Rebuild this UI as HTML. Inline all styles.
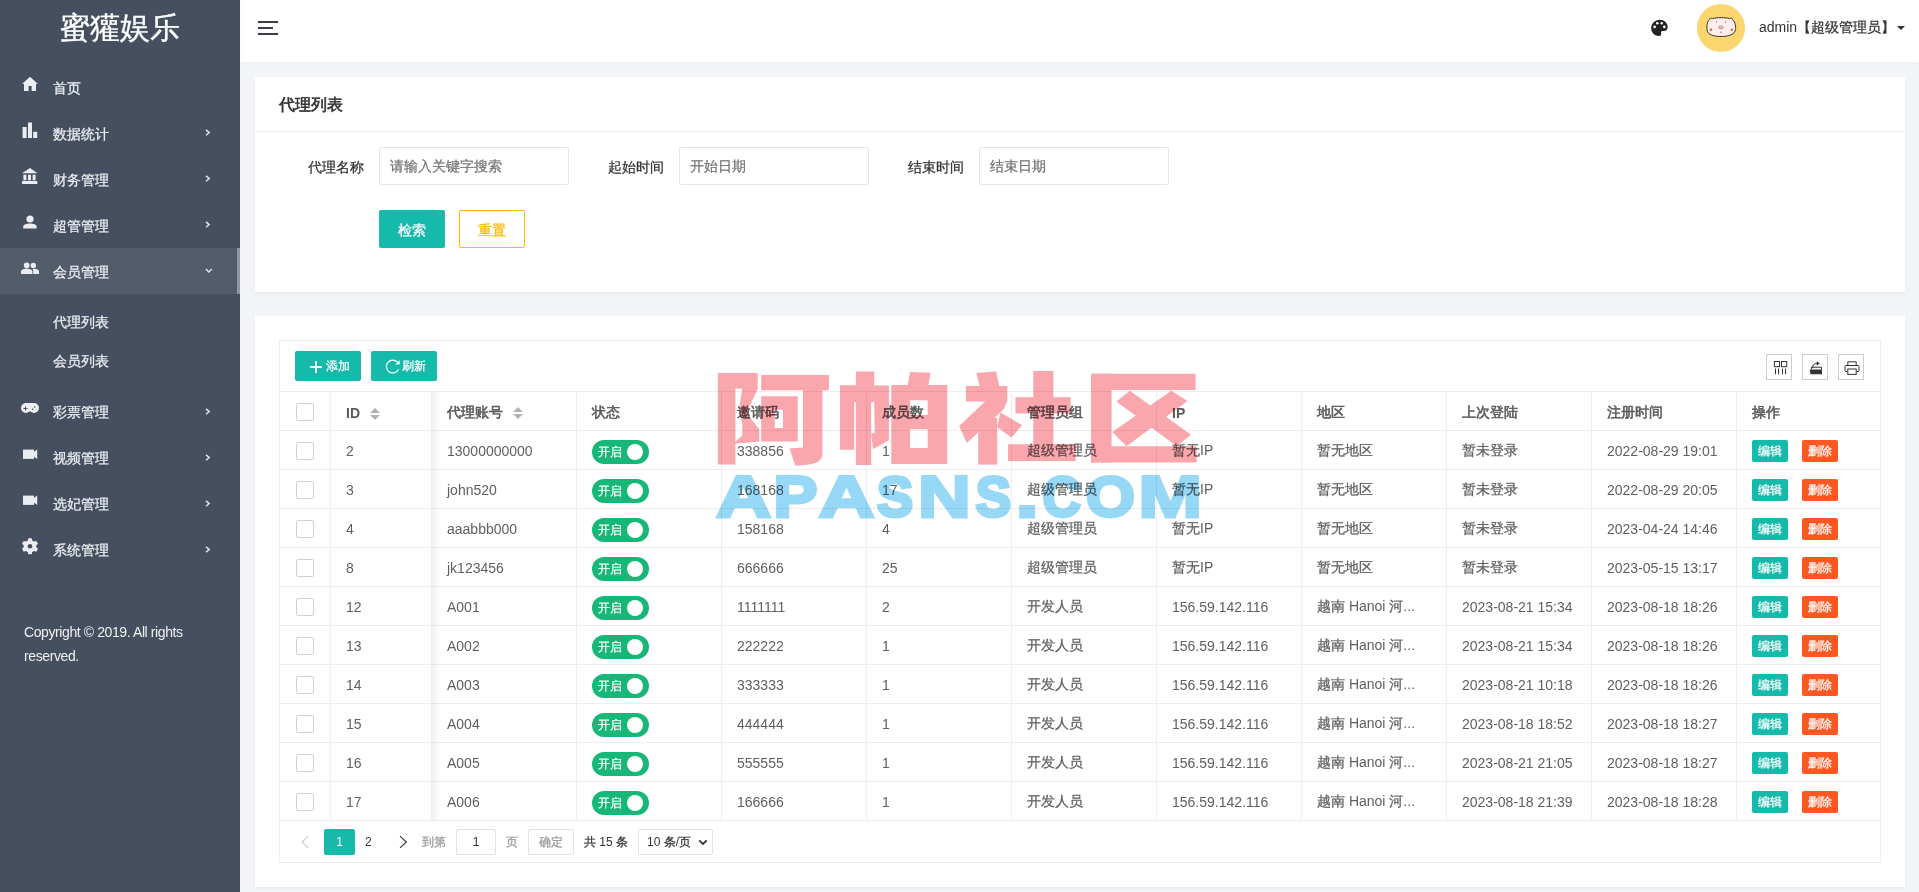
<!DOCTYPE html>
<html><head><meta charset="utf-8">
<style>
*{box-sizing:border-box;margin:0;padding:0}
html,body{width:1919px;height:892px;overflow:hidden;background:#f3f4f8;font-family:"Liberation Sans",sans-serif;font-size:14px;color:#5f5f5f}
#side{position:absolute;left:0;top:0;width:240px;height:892px;background:#454f5f}
#logo{position:absolute;left:0;top:8px;width:240px;text-align:center;color:#fff;font-size:30px;line-height:40px}
.mi{position:absolute;left:0;width:240px;height:46px;color:#eceef1}
.mi .t{position:absolute;left:53px;top:1px;line-height:46px;font-size:14px}
.mi svg{position:absolute;left:22px;top:13px}
.mi .ar{position:absolute;left:205px;top:19px}
.mi.act{background:#535c6b}
.mi.act:after{content:"";position:absolute;right:0;top:0;width:3px;height:46px;background:#8f97a3}
.si{position:absolute;left:53px;color:#eceef1;font-size:14px;line-height:20px}
#copy{position:absolute;left:24px;top:620px;width:210px;color:#f0f0f0;font-size:14px;line-height:24px;letter-spacing:-0.4px}
#hdr{position:absolute;left:240px;top:0;width:1679px;height:62px;background:#fff;box-shadow:0 1px 3px rgba(0,0,0,0.03)}
#hsh{position:absolute;left:0;top:0;width:6px;height:62px;background:linear-gradient(to right,rgba(0,0,0,0.025),rgba(0,0,0,0))}
.panel{position:absolute;left:255px;width:1650px;background:#fff;box-shadow:0 2px 3px rgba(0,0,0,0.04)}
.ham{position:absolute;height:2px;background:#393d49;left:18px}
#uname{position:absolute;left:1519px;top:17px;line-height:20px;color:#333;font-size:14px}
#caret{position:absolute;left:1657px;top:26px;width:0;height:0;border-left:4px solid transparent;border-right:4px solid transparent;border-top:4px solid #333}
#ptitle{position:absolute;left:24px;top:17px;font-size:16px;line-height:22px;color:#333;font-weight:normal}
#ptitle .k{-webkit-text-stroke:0.6px}
#logo .k{-webkit-text-stroke:0.4px}
#psep{position:absolute;left:0;top:54px;width:1650px;height:1px;background:#f0f0f0}
.lbl{position:absolute;top:80px;width:80px;text-align:right;line-height:20px;color:#333;font-size:14px}
.inp{position:absolute;top:70px;width:190px;height:38px;border:1px solid #e6e6e6;border-radius:2px;padding-left:10px;line-height:36px;color:#757575;font-size:14px}
.btn{position:absolute;top:133px;width:66px;height:38px;border-radius:2px;text-align:center;line-height:40px;font-size:14px}
#tbox{position:absolute;left:24px;top:24px;width:1602px;height:523px;border:1px solid #eee}
#tbar{position:absolute;left:0;top:0;width:1600px;height:51px;border-bottom:1px solid #eee}
.tb{position:absolute;top:10px;width:66px;height:30px;background:#16baaa;color:#fff;border-radius:2px;font-size:14px;line-height:30px}
.ti{position:absolute;top:13px;width:26px;height:26px;border:1px solid #ccc}
.ti svg{position:absolute;left:4px;top:4px}
table{position:absolute;left:0;top:51px;border-collapse:separate;border-spacing:0;table-layout:fixed;width:1600px}
td,th{height:39px;border-right:1px solid #eee;border-bottom:1px solid #eee;padding:2px 15px 0 15px;text-align:left;white-space:nowrap;overflow:hidden;font-size:14px;color:#5f5f5f;font-weight:normal;vertical-align:middle}
th{font-weight:bold;color:#5a5a5a;padding-top:3px}
th .k{-webkit-text-stroke:0.55px;font-weight:normal}
td:last-child,th:last-child{border-right:none}
.cb{display:inline-block;position:relative;top:1px;width:18px;height:18px;border:1px solid #d2d2d2;border-radius:2px;vertical-align:middle}
.c0{padding:0 0 0 16px}
.sw{position:relative;top:1px;display:inline-block;width:57px;height:24px;border-radius:12px;background:#16b777;color:#fff;font-size:12px;line-height:24px;padding-left:6px;vertical-align:middle}
.sw b{position:absolute;left:35px;top:4px;width:16px;height:16px;border-radius:50%;background:#fff}
.be,.bd{display:inline-block;width:36px;height:22px;line-height:22px;text-align:center;color:#fff;font-size:12px;border-radius:2px;vertical-align:middle}
.be{background:#16baaa}
.bd{background:#ff5722;margin-left:14px}
.sort{display:inline-block;position:relative;width:10px;height:12px;vertical-align:middle;margin-left:10px}
.sort:before{content:"";position:absolute;left:0;top:0;border-left:5px solid transparent;border-right:5px solid transparent;border-bottom:5px solid #b2b2b2}
.sort:after{content:"";position:absolute;left:0;top:7px;border-left:5px solid transparent;border-right:5px solid transparent;border-top:5px solid #b2b2b2}
#fshadow{position:absolute;left:152px;top:51px;width:9px;height:429px;background:linear-gradient(to right,rgba(0,0,0,0.06),rgba(0,0,0,0))}
#pager{position:absolute;left:0;top:480px;width:1600px;height:41px;font-size:12px;color:#333}
.pg{position:absolute;line-height:20px}
.pbox{position:absolute;top:8px;height:26px;border:1px solid #e2e2e2;border-radius:2px;text-align:center;line-height:24px}
#wm1{position:absolute;left:706px;top:355px;font-size:124px;line-height:124px;font-weight:900;color:#f9a3aa;mix-blend-mode:multiply;white-space:nowrap;letter-spacing:-2px}
#wm2{position:absolute;left:716px;top:455px;font-size:62px;line-height:80px;font-weight:bold;color:#9bd9f5;mix-blend-mode:multiply;white-space:nowrap}
.k{-webkit-text-stroke:0.25px}
</style></head><body>
<div id="side">
  <div id="logo"><span class="k">蜜獾娱乐</span></div>
  <div class="mi" style="top:64px"><span class="t"><span class="k">首页</span></span></div>
  <div class="mi" style="top:110px"><span class="t"><span class="k">数据统计</span></span></div>
  <div class="mi" style="top:156px"><span class="t"><span class="k">财务管理</span></span></div>
  <div class="mi" style="top:202px"><span class="t"><span class="k">超管管理</span></span></div>
  <div class="mi act" style="top:248px"><span class="t"><span class="k">会员管理</span></span></div>
  <div class="si" style="top:312px"><span class="k">代理列表</span></div>
  <div class="si" style="top:351px"><span class="k">会员列表</span></div>
  <div class="mi" style="top:388px"><span class="t"><span class="k">彩票管理</span></span></div>
  <div class="mi" style="top:434px"><span class="t"><span class="k">视频管理</span></span></div>
  <div class="mi" style="top:480px"><span class="t"><span class="k">选妃管理</span></span></div>
  <div class="mi" style="top:526px"><span class="t"><span class="k">系统管理</span></span></div>
  <svg id="sideico" width="240" height="892" style="position:absolute;left:0;top:0" fill="#ebedf0">
<path d="M22,84 L30,76.8 L38,84 L36,84 L36,91 L31.6,91 L31.6,86 L28.6,86 L28.6,91 L24,91 L24,84 Z"/>
<rect x="22.6" y="127" width="4" height="11"/><rect x="28" y="122.5" width="4" height="15.5"/><rect x="33.2" y="131.8" width="4" height="6.2"/>
<path d="M22,173.3 L30,168 L37.4,173.3 Z"/><rect x="23.4" y="174.7" width="3" height="5.6"/><rect x="28" y="174.7" width="3" height="5.6"/><rect x="32.6" y="174.7" width="3" height="5.6"/><rect x="22" y="181" width="15.3" height="3"/>
<circle cx="30" cy="219" r="3.6"/><path d="M23.2,228.5 L36.7,228.5 L36.7,226.8 C36.7,224.4 33.4,223.4 30,223.4 C26.6,223.4 23.2,224.4 23.2,226.8 Z"/>
<circle cx="26.7" cy="265.4" r="2.8"/><circle cx="33.3" cy="265.4" r="2.7"/>
<path d="M21,274 L32.4,274 L32.4,271.6 C32.4,269.6 29.4,268.8 26.7,268.8 C24,268.8 21,269.6 21,271.6 Z"/><path d="M33.2,274 L39,274 L39,271.6 C39,269.6 36.4,268.8 33.6,268.8 C33.3,268.8 32.9,268.8 32.6,268.9 C33.2,269.6 33.2,270.5 33.2,271.6 Z"/>
<path d="M26,403 L34,403 A5,5 0 0 1 34,413 C32.5,413 31.5,411.6 30,411.6 C28.5,411.6 27.5,413 26,413 A5,5 0 0 1 26,403 Z"/>
<rect x="23.5" y="408" width="4" height="1" fill="#454f5f"/><rect x="25" y="406.5" width="1" height="4" fill="#454f5f"/><circle cx="32.6" cy="409.2" r="0.8" fill="#454f5f"/><circle cx="34.6" cy="407" r="0.8" fill="#454f5f"/>
<rect x="23" y="449.6" width="11" height="9.3"/><path d="M33.5,452.3 L37.2,449.6 L37.2,458.9 L33.5,456.2 Z"/>
<rect x="23" y="495.6" width="11" height="9.3"/><path d="M33.5,498.3 L37.2,495.6 L37.2,504.9 L33.5,502.2 Z"/>
<g transform="translate(30,546.3)"><path d="M-1.7,-8 h3.4 l0.5,2.2 l1.9,1.1 l2.2,-0.7 l1.7,2.9 l-1.7,1.5 v2 l1.7,1.5 l-1.7,2.9 l-2.2,-0.7 l-1.9,1.1 l-0.5,2.2 h-3.4 l-0.5,-2.2 l-1.9,-1.1 l-2.2,0.7 l-1.7,-2.9 l1.7,-1.5 v-2 l-1.7,-1.5 l1.7,-2.9 l2.2,0.7 l1.9,-1.1 Z"/><circle r="2.3" fill="#454f5f"/></g>
<g fill="none" stroke="#dfe2e6" stroke-width="1.5" stroke-linecap="square">
<path d="M206.6,130.4 L209.2,132.6 L206.6,134.8"/>
<path d="M206.6,176.4 L209.2,178.6 L206.6,180.8"/>
<path d="M206.6,222.4 L209.2,224.6 L206.6,226.8"/>
<path d="M206.4,269.6 L208.8,272 L211.2,269.6"/>
<path d="M206.6,409.4 L209.2,411.6 L206.6,413.8"/>
<path d="M206.6,455.4 L209.2,457.6 L206.6,459.8"/>
<path d="M206.6,501.4 L209.2,503.6 L206.6,505.8"/>
<path d="M206.6,547.4 L209.2,549.6 L206.6,551.8"/>
</g>
</svg>
<div id="copy">Copyright © 2019. All rights reserved.</div>
</div>
<div id="hdr">
  <div id="hsh"></div>
  <div class="ham" style="top:21px;width:20px"></div>
  <div class="ham" style="top:27px;width:15px"></div>
  <div class="ham" style="top:33px;width:20px"></div>
  <div id="uname">admin<span class="k">【超级管理员】</span></div>
  <div id="caret"></div>
</div>
<div class="panel" style="top:77px;height:215px">
  <div id="ptitle"><span class="k">代理列表</span></div>
  <div id="psep"></div>
  <div class="lbl" style="left:29px"><span class="k">代理名称</span></div>
  <div class="inp" style="left:124px"><span class="k">请输入关键字搜索</span></div>
  <div class="lbl" style="left:329px"><span class="k">起始时间</span></div>
  <div class="inp" style="left:424px"><span class="k">开始日期</span></div>
  <div class="lbl" style="left:629px"><span class="k">结束时间</span></div>
  <div class="inp" style="left:724px"><span class="k">结束日期</span></div>
  <div class="btn" style="left:124px;background:#16baaa;color:#fff"><span class="k">检索</span></div>
  <div class="btn" style="left:204px;border:1px solid #ffb800;color:#ffb800;line-height:38px"><span class="k">重置</span></div>
</div>
<div class="panel" style="top:316px;height:571px">
 <div id="tbox">
  <div id="tbar">
    <div class="tb" style="left:15px"><span style="position:absolute;left:31px;top:0;font-size:12px"><span class="k">添加</span></span></div>
    <div class="tb" style="left:91px"><span style="position:absolute;left:31px;top:0;font-size:12px"><span class="k">刷新</span></span></div>
    <div class="ti" style="left:1486px"></div>
    <div class="ti" style="left:1522px"></div>
    <div class="ti" style="left:1558px"></div>
  </div>
  <table>
   <colgroup><col style="width:51px"><col style="width:101px"><col style="width:145px"><col style="width:145px"><col style="width:145px"><col style="width:145px"><col style="width:145px"><col style="width:145px"><col style="width:145px"><col style="width:145px"><col style="width:145px"><col style="width:143px"></colgroup>
   <tr><th class="c0"><i class="cb"></i></th><th>ID<i class="sort"></i></th><th><span class="k">代理账号</span><i class="sort"></i></th><th><span class="k">状态</span></th><th><span class="k">邀请码</span></th><th><span class="k">成员数</span></th><th><span class="k">管理员组</span></th><th>IP</th><th><span class="k">地区</span></th><th><span class="k">上次登陆</span></th><th><span class="k">注册时间</span></th><th><span class="k">操作</span></th></tr>
<tr><td class="c0"><i class="cb"></i></td><td>2</td><td>13000000000</td><td><span class="sw"><span class="k">开启</span><b></b></span></td><td>338856</td><td>1</td><td><span class="k">超级管理员</span></td><td><span class="k">暂无</span>IP</td><td><span class="k">暂无地区</span></td><td><span class="k">暂未登录</span></td><td>2022-08-29 19:01</td><td><span class="be"><span class="k">编辑</span></span><span class="bd"><span class="k">删除</span></span></td></tr>
<tr><td class="c0"><i class="cb"></i></td><td>3</td><td>john520</td><td><span class="sw"><span class="k">开启</span><b></b></span></td><td>168168</td><td>17</td><td><span class="k">超级管理员</span></td><td><span class="k">暂无</span>IP</td><td><span class="k">暂无地区</span></td><td><span class="k">暂未登录</span></td><td>2022-08-29 20:05</td><td><span class="be"><span class="k">编辑</span></span><span class="bd"><span class="k">删除</span></span></td></tr>
<tr><td class="c0"><i class="cb"></i></td><td>4</td><td>aaabbb000</td><td><span class="sw"><span class="k">开启</span><b></b></span></td><td>158168</td><td>4</td><td><span class="k">超级管理员</span></td><td><span class="k">暂无</span>IP</td><td><span class="k">暂无地区</span></td><td><span class="k">暂未登录</span></td><td>2023-04-24 14:46</td><td><span class="be"><span class="k">编辑</span></span><span class="bd"><span class="k">删除</span></span></td></tr>
<tr><td class="c0"><i class="cb"></i></td><td>8</td><td>jk123456</td><td><span class="sw"><span class="k">开启</span><b></b></span></td><td>666666</td><td>25</td><td><span class="k">超级管理员</span></td><td><span class="k">暂无</span>IP</td><td><span class="k">暂无地区</span></td><td><span class="k">暂未登录</span></td><td>2023-05-15 13:17</td><td><span class="be"><span class="k">编辑</span></span><span class="bd"><span class="k">删除</span></span></td></tr>
<tr><td class="c0"><i class="cb"></i></td><td>12</td><td>A001</td><td><span class="sw"><span class="k">开启</span><b></b></span></td><td>1111111</td><td>2</td><td><span class="k">开发人员</span></td><td>156.59.142.116</td><td><span class="k">越南</span> Hanoi <span class="k">河</span>...</td><td>2023-08-21 15:34</td><td>2023-08-18 18:26</td><td><span class="be"><span class="k">编辑</span></span><span class="bd"><span class="k">删除</span></span></td></tr>
<tr><td class="c0"><i class="cb"></i></td><td>13</td><td>A002</td><td><span class="sw"><span class="k">开启</span><b></b></span></td><td>222222</td><td>1</td><td><span class="k">开发人员</span></td><td>156.59.142.116</td><td><span class="k">越南</span> Hanoi <span class="k">河</span>...</td><td>2023-08-21 15:34</td><td>2023-08-18 18:26</td><td><span class="be"><span class="k">编辑</span></span><span class="bd"><span class="k">删除</span></span></td></tr>
<tr><td class="c0"><i class="cb"></i></td><td>14</td><td>A003</td><td><span class="sw"><span class="k">开启</span><b></b></span></td><td>333333</td><td>1</td><td><span class="k">开发人员</span></td><td>156.59.142.116</td><td><span class="k">越南</span> Hanoi <span class="k">河</span>...</td><td>2023-08-21 10:18</td><td>2023-08-18 18:26</td><td><span class="be"><span class="k">编辑</span></span><span class="bd"><span class="k">删除</span></span></td></tr>
<tr><td class="c0"><i class="cb"></i></td><td>15</td><td>A004</td><td><span class="sw"><span class="k">开启</span><b></b></span></td><td>444444</td><td>1</td><td><span class="k">开发人员</span></td><td>156.59.142.116</td><td><span class="k">越南</span> Hanoi <span class="k">河</span>...</td><td>2023-08-18 18:52</td><td>2023-08-18 18:27</td><td><span class="be"><span class="k">编辑</span></span><span class="bd"><span class="k">删除</span></span></td></tr>
<tr><td class="c0"><i class="cb"></i></td><td>16</td><td>A005</td><td><span class="sw"><span class="k">开启</span><b></b></span></td><td>555555</td><td>1</td><td><span class="k">开发人员</span></td><td>156.59.142.116</td><td><span class="k">越南</span> Hanoi <span class="k">河</span>...</td><td>2023-08-21 21:05</td><td>2023-08-18 18:27</td><td><span class="be"><span class="k">编辑</span></span><span class="bd"><span class="k">删除</span></span></td></tr>
<tr><td class="c0"><i class="cb"></i></td><td>17</td><td>A006</td><td><span class="sw"><span class="k">开启</span><b></b></span></td><td>166666</td><td>1</td><td><span class="k">开发人员</span></td><td>156.59.142.116</td><td><span class="k">越南</span> Hanoi <span class="k">河</span>...</td><td>2023-08-18 21:39</td><td>2023-08-18 18:28</td><td><span class="be"><span class="k">编辑</span></span><span class="bd"><span class="k">删除</span></span></td></tr>
  </table>
  <div id="fshadow"></div>
  <div id="pager">
    <div class="pbox" style="left:44px;width:31px;background:#16baaa;border-color:#16baaa;color:#fff;font-size:12px">1</div>
    <div class="pg" style="left:85px;top:11px">2</div>
    <div class="pg" style="left:142px;top:11px;color:#999"><span class="k">到第</span></div>
    <div class="pbox" style="left:176px;width:40px;color:#333">1</div>
    <div class="pg" style="left:226px;top:11px;color:#999"><span class="k">页</span></div>
    <div class="pbox" style="left:248px;width:46px;color:#999"><span class="k">确定</span></div>
    <div class="pg" style="left:304px;top:11px"><span class="k">共</span> 15 <span class="k">条</span></div>
    <div class="pbox" style="left:358px;width:75px;text-align:left;padding-left:8px;color:#333">10 <span class="k">条</span>/<span class="k">页</span></div>
  </div>
 </div>
</div>
<svg id="ovl" width="1919" height="892" style="position:absolute;left:0;top:0;pointer-events:none">
<path fill="#222" d="M1659.5,19.8 C1664.2,19.8 1667.7,23 1667.7,27 C1667.7,29.6 1666.1,30.9 1664,30.9 L1662.6,30.9 C1661.1,30.9 1660.6,32.1 1661.1,33.6 C1661.6,35.1 1660.6,36.1 1659.1,36.1 C1654.6,36.1 1651.2,32.6 1651.2,28.1 C1651.2,23.5 1655,19.8 1659.5,19.8 Z"/>
<g fill="#fff"><circle cx="1657.3" cy="23.3" r="1.3"/><circle cx="1661.7" cy="23.3" r="1.3"/><circle cx="1654.6" cy="26.9" r="1.3"/><circle cx="1664.3" cy="26.9" r="1.3"/></g>
<circle cx="1721" cy="28" r="24" fill="#fbd56d"/>
<path fill="#fcefee" stroke="#2a2020" stroke-width="0.9" d="M1709.5,19.5 C1709,18.3 1711,17.8 1712.5,18.6 C1716,17.4 1726,17.4 1729.5,18.6 C1731,17.8 1733,18.3 1732.5,19.5 C1735.8,22.5 1735.8,27 1735.5,29.5 C1735,34.5 1728.5,36.5 1721,36.5 C1713.5,36.5 1707.2,34.5 1707,29.5 C1706.8,27 1706.6,22.5 1709.5,19.5 Z"/>
<ellipse cx="1721" cy="27.3" rx="2.6" ry="1.6" fill="#f4b8b8" stroke="#8a6060" stroke-width="0.4"/>
<circle cx="1711" cy="29.7" r="1.2" fill="#ff5a2a"/><circle cx="1731.9" cy="29.7" r="1.2" fill="#ff5a2a"/>
<g fill="#333"><rect x="1716.3" y="21.2" width="0.6" height="1.4"/><rect x="1725.3" y="21.2" width="0.6" height="1.4"/><rect x="1720.6" y="31.6" width="0.9" height="1.3"/></g>
<g fill="#fff"><rect x="310.1" y="366" width="11.7" height="2"/><rect x="315" y="361.1" width="2" height="11.7"/></g>
<g fill="none" stroke="#fff" stroke-width="1.2"><path d="M398.6,369.3 A6.4,6.4 0 1 1 397.6,362.3"/></g>
<path fill="#fff" d="M399.6,360.2 L399.6,364.6 L395.2,364.6 Z"/>
<g fill="none" stroke="#333" stroke-width="1"><rect x="1774.4" y="361.5" width="5.2" height="5.2"/><rect x="1781.5" y="361.5" width="5.2" height="5.2"/><path d="M1775.5,368.5 v5.8 M1778.5,368.5 v5.8 M1782.5,368.5 v5.8 M1785.6,368.5 v5.8"/></g>
<g fill="#333"><path d="M1809.6,369.5 L1822,369.5 L1822,374.3 L1810.5,374.3 Z"/></g>
<g fill="none" stroke="#333" stroke-width="1"><path d="M1811.5,369 v-1.8 h10 v2"/><path d="M1812.6,368.2 C1812.4,365 1814,363.3 1817.5,363.3"/></g>
<path fill="#333" d="M1816.8,361 L1819.7,363.4 L1816.8,365.8 Z"/>
<g fill="none" stroke="#333" stroke-width="1"><path d="M1847.8,365.5 v-3.7 h8.4 v3.7"/><path d="M1847.5,371.5 h-1.8 c-0.5,0 -0.7,-0.3 -0.7,-0.8 v-4.2 c0,-0.6 0.4,-1 1,-1 h12 c0.6,0 1,0.4 1,1 v4.2 c0,0.5 -0.2,0.8 -0.7,0.8 h-1.8"/><rect x="1847.8" y="369" width="8.4" height="5.4"/></g>
<g fill="none" stroke-width="1.1"><path d="M308.3,836.2 L302,842 L308.3,847.8" stroke="#c9c9c9"/><path d="M400,836.2 L406.4,842 L400,847.8" stroke="#333"/></g>
<path d="M699.3,840.3 L703,844 L706.7,840.3" fill="none" stroke="#333" stroke-width="1.8"/>
</svg>
<svg id="wm" width="1919" height="892" style="position:absolute;left:0;top:0;mix-blend-mode:multiply;pointer-events:none"><g fill="#faa6ad" fill-rule="evenodd"><path d="M717.9,373.1 L735.4,373.1 L735.4,464.6 L717.9,464.6 Z"/><path d="M734.9,373.1 L757.7,373.1 L757.7,389.1 L746.3,413.1 L759.1,429.1 L759.4,441.4 L734.9,443.7 L734.9,442.3 L742.3,435.4 L742.3,422.9 L738.5,411.4 L742.3,388.6 L734.9,388.6 Z"/><path d="M761.2,375.0 L828.9,375.0 L828.9,390.3 L761.2,390.3 Z"/><path d="M761.2,396.2 L797.7,396.2 L797.7,441.5 L761.2,441.5 Z M774.7,409.7 L783.0,409.7 L783.0,428.0 L774.7,428.0 Z"/><path d="M803.0,389.7 L822.4,389.7 L822.4,454.5 C821.8,463.3 813.0,464.8 795.3,465.6 L789.4,448.6 L803.0,447.4 Z"/><path d="M855.9,371.5 L874.2,371.5 L874.2,402.1 L855.9,402.1 Z"/><path d="M855.9,401.5 L871.2,401.5 L871.2,465.1 L855.9,465.1 Z"/><path d="M840.0,385.6 L854.2,385.6 L854.2,449.8 L840.0,449.8 Z"/><path d="M840.0,385.6 L888.9,385.6 L888.9,402.1 L840.0,402.1 Z"/><path d="M874.2,401.5 L888.9,401.5 L888.9,440.3 L873.0,449.2 L871.2,433.3 L874.8,433.3 Z"/><path d="M910.1,372.1 L930.7,372.7 L928.3,385.6 L907.7,385.6 Z"/><path d="M891.3,385.0 L947.2,385.0 L947.2,463.9 L891.3,463.9 Z M910.1,400.3 L927.7,400.3 L927.7,415.0 L910.1,415.0 Z M910.1,429.2 L927.7,429.2 L927.7,448.0 L910.1,448.0 Z"/><path d="M976.4,372.9 L996.1,371.4 L999.5,386.7 L979.8,386.7 Z"/><path d="M966.0,386.0 L1007.3,386.0 L1007.3,401.6 L966.0,401.6 Z"/><path d="M985.6,400.9 L1007.3,400.9 L1003.3,409.7 L966.7,442.9 L959.2,426.0 Z"/><path d="M978.2,417.8 L997.2,417.8 L997.2,464.6 L978.2,464.6 Z"/><path d="M1000.5,412.4 L1022.2,425.3 L1011.4,437.5 L997.2,427.3 Z"/><path d="M1033.3,371.1 L1053.4,371.1 L1053.4,451.7 L1033.3,451.7 Z"/><path d="M1015.5,397.2 L1070.7,397.2 L1070.7,413.5 L1015.5,413.5 Z"/><path d="M1008.0,444.3 L1075.7,444.3 L1075.7,460.9 L1008.0,460.9 Z"/><path d="M1091.1,373.8 L1195.6,373.8 L1195.6,390.1 L1091.1,390.1 Z"/><path d="M1091.1,373.8 L1111.6,373.8 L1111.6,462.5 L1091.1,462.5 Z"/><path d="M1091.1,446.3 L1196.7,446.3 L1196.7,462.5 L1091.1,462.5 Z"/><path d="M1116.4,401.6 L1129.9,390.7 L1190.9,434.8 L1176.7,446.3 Z"/><path d="M1171.3,390.7 L1187.5,400.9 L1126.5,446.3 L1112.3,432.1 Z"/></g><g fill="#97d8f6" stroke="#97d8f6" stroke-width="3.60" stroke-linejoin="miter"><path vector-effect="non-scaling-stroke" transform="matrix(0.03734,0,0,-0.02825,716.00,516.60)" d="M1133 0 1008 360H471L346 0H51L565 1409H913L1425 0ZM739 1192 733 1170Q723 1134 709.0 1088.0Q695 1042 537 582H942L803 987L760 1123Z"/><path vector-effect="non-scaling-stroke" transform="matrix(0.03218,0,0,-0.02825,773.49,516.60)" d="M1296 963Q1296 827 1234.0 720.0Q1172 613 1056.5 554.5Q941 496 782 496H432V0H137V1409H770Q1023 1409 1159.5 1292.5Q1296 1176 1296 963ZM999 958Q999 1180 737 1180H432V723H745Q867 723 933.0 783.5Q999 844 999 958Z"/><path vector-effect="non-scaling-stroke" transform="matrix(0.03770,0,0,-0.02825,818.68,516.60)" d="M1133 0 1008 360H471L346 0H51L565 1409H913L1425 0ZM739 1192 733 1170Q723 1134 709.0 1088.0Q695 1042 537 582H942L803 987L760 1123Z"/><path vector-effect="non-scaling-stroke" transform="matrix(0.02632,0,0,-0.02745,877.05,516.05)" d="M1286 406Q1286 199 1132.5 89.5Q979 -20 682 -20Q411 -20 257.0 76.0Q103 172 59 367L344 414Q373 302 457.0 251.5Q541 201 690 201Q999 201 999 389Q999 449 963.5 488.0Q928 527 863.5 553.0Q799 579 616 616Q458 653 396.0 675.5Q334 698 284.0 728.5Q234 759 199.0 802.0Q164 845 144.5 903.0Q125 961 125 1036Q125 1227 268.5 1328.5Q412 1430 686 1430Q948 1430 1079.5 1348.0Q1211 1266 1249 1077L963 1038Q941 1129 873.5 1175.0Q806 1221 680 1221Q412 1221 412 1053Q412 998 440.5 963.0Q469 928 525.0 903.5Q581 879 752 842Q955 799 1042.5 762.5Q1130 726 1181.0 677.5Q1232 629 1259.0 561.5Q1286 494 1286 406Z"/><path vector-effect="non-scaling-stroke" transform="matrix(0.03563,0,0,-0.02825,918.02,516.60)" d="M995 0 381 1085Q399 927 399 831V0H137V1409H474L1097 315Q1079 466 1079 590V1409H1341V0Z"/><path vector-effect="non-scaling-stroke" transform="matrix(0.02575,0,0,-0.02745,975.78,516.05)" d="M1286 406Q1286 199 1132.5 89.5Q979 -20 682 -20Q411 -20 257.0 76.0Q103 172 59 367L344 414Q373 302 457.0 251.5Q541 201 690 201Q999 201 999 389Q999 449 963.5 488.0Q928 527 863.5 553.0Q799 579 616 616Q458 653 396.0 675.5Q334 698 284.0 728.5Q234 759 199.0 802.0Q164 845 144.5 903.0Q125 961 125 1036Q125 1227 268.5 1328.5Q412 1430 686 1430Q948 1430 1079.5 1348.0Q1211 1266 1249 1077L963 1038Q941 1129 873.5 1175.0Q806 1221 680 1221Q412 1221 412 1053Q412 998 440.5 963.0Q469 928 525.0 903.5Q581 879 752 842Q955 799 1042.5 762.5Q1130 726 1181.0 677.5Q1232 629 1259.0 561.5Q1286 494 1286 406Z"/><path vector-effect="non-scaling-stroke" transform="matrix(0.04256,0,0,-0.03213,1015.08,516.60)" d="M139 0V305H428V0Z"/><path vector-effect="non-scaling-stroke" transform="matrix(0.02569,0,0,-0.02745,1042.64,516.05)" d="M795 212Q1062 212 1166 480L1423 383Q1340 179 1179.5 79.5Q1019 -20 795 -20Q455 -20 269.5 172.5Q84 365 84 711Q84 1058 263.0 1244.0Q442 1430 782 1430Q1030 1430 1186.0 1330.5Q1342 1231 1405 1038L1145 967Q1112 1073 1015.5 1135.5Q919 1198 788 1198Q588 1198 484.5 1074.0Q381 950 381 711Q381 468 487.5 340.0Q594 212 795 212Z"/><path vector-effect="non-scaling-stroke" transform="matrix(0.03071,0,0,-0.02745,1086.02,516.05)" d="M1507 711Q1507 491 1420.0 324.0Q1333 157 1171.0 68.5Q1009 -20 793 -20Q461 -20 272.5 175.5Q84 371 84 711Q84 1050 272.0 1240.0Q460 1430 795 1430Q1130 1430 1318.5 1238.0Q1507 1046 1507 711ZM1206 711Q1206 939 1098.0 1068.5Q990 1198 795 1198Q597 1198 489.0 1069.5Q381 941 381 711Q381 479 491.5 345.5Q602 212 793 212Q991 212 1098.5 342.0Q1206 472 1206 711Z"/><path vector-effect="non-scaling-stroke" transform="matrix(0.03750,0,0,-0.02825,1138.26,516.60)" d="M1307 0V854Q1307 883 1307.5 912.0Q1308 941 1317 1161Q1246 892 1212 786L958 0H748L494 786L387 1161Q399 929 399 854V0H137V1409H532L784 621L806 545L854 356L917 582L1176 1409H1569V0Z"/></g></svg>
</body></html>
